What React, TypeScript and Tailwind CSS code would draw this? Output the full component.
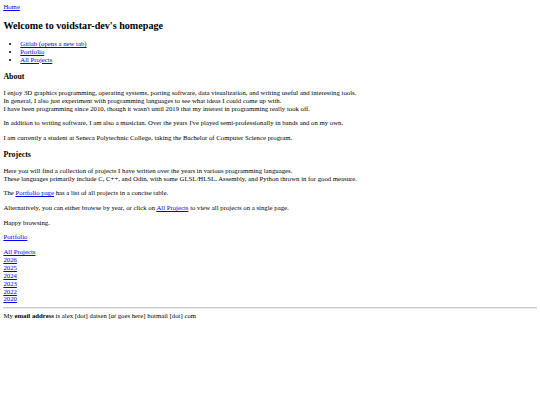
import React from "react";

const years = ["2026", "2025", "2024", "2023", "2022", "2020"];

const A = ({ children }: { children: React.ReactNode }) => (
  <a href="#" className="text-[#0000ee] underline">
    {children}
  </a>
);

const App = () => {
  return (
    <div className="bg-white text-black min-h-[405px] p-[0.5em] text-[6.76px] leading-[1.17] font-['Liberation_Serif',serif]">
      <nav>
        <A>Home</A>
      </nav>
      <main>
        <h1 className="text-[1.5em] font-bold my-[0.83em]">Welcome to voidstar-dev's homepage</h1>
        <ul className="list-disc pl-[2.5em] my-[1em]">
          <li>
            <A>Gitlab (opens a new tab)</A>
          </li>
          <li>
            <A>Portfolio</A>
          </li>
          <li>
            <A>All Projects</A>
          </li>
        </ul>

        <h3 className="text-[1.17em] font-bold my-[1em]">About</h3>
        <p className="my-[1em]">
          I enjoy 3D graphics programming, operating systems, porting software, data visualization, and writing useful and interesting tools.
          <br />
          In general, I also just experiment with programming languages to see what ideas I could come up with.
          <br />
          I have been programming since 2010, though it wasn't until 2019 that my interest in programming really took off.
        </p>
        <p className="my-[1em]">
          In addition to writing software, I am also a musician. Over the years I've played semi-professionally in bands and on my own.
        </p>
        <p className="my-[1em]">
          I am currently a student at Seneca Polytechnic College, taking the Bachelor of Computer Science program.
        </p>

        <h3 className="text-[1.17em] font-bold my-[1em]">Projects</h3>
        <p className="my-[1em]">
          Here you will find a collection of projects I have written over the years in various programming languages.
          <br />
          These languages primarily include C, C++, and Odin, with some GLSL/HLSL, Assembly, and Python thrown in for good measure.
        </p>
        <p className="my-[1em]">
          The <A>Portfolio page</A> has a list of all projects in a concise table.
        </p>
        <p className="my-[1em]">
          Alternatively, you can either browse by year, or click on <A>All Projects</A> to view all projects on a single page.
        </p>
        <p className="my-[1em]">Happy browsing.</p>

        <p className="my-[1em]">
          <A>Portfolio</A>
        </p>
        <div className="flex flex-col items-start">
          <A>All Projects</A>
          {years.map((y) => (
            <A key={y}>{y}</A>
          ))}
        </div>
      </main>
      <hr className="my-[0.5em] border-t border-t-[#c8c8c8] border-b border-b-[#eeeeee]" />
      <footer>
        My <b>email address</b> is alex [dot] datsen [<i>at</i> goes here] hotmail [dot] com
      </footer>
    </div>
  );
};

export default App;
